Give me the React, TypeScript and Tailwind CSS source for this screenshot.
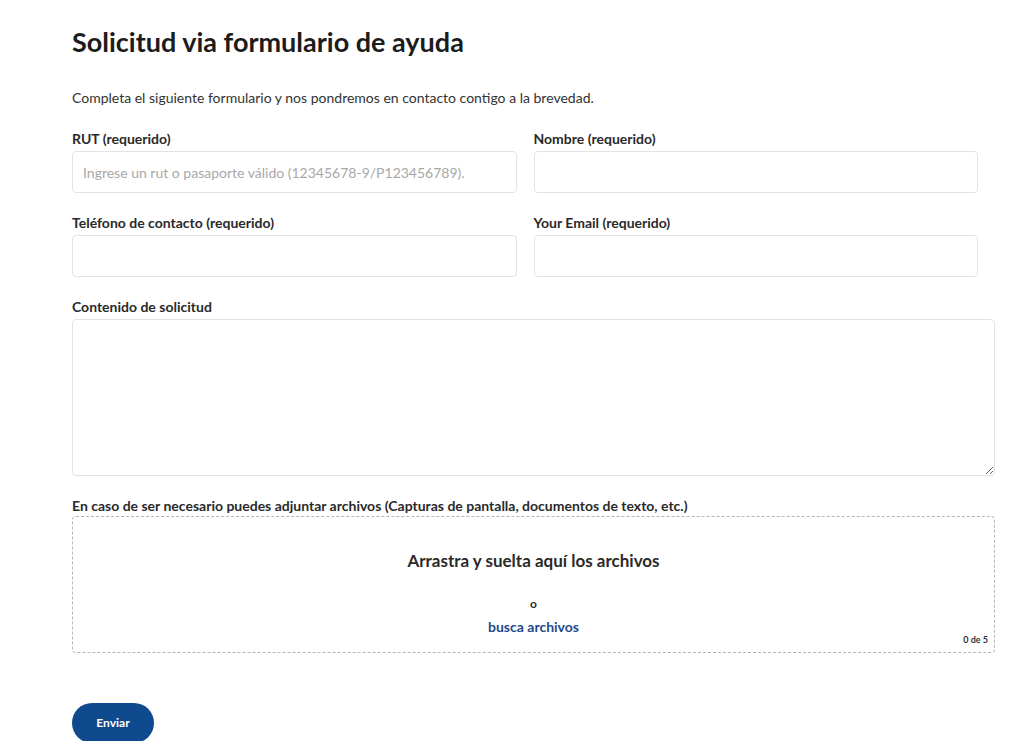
import React from "react";

export default function App() {
  const font = { fontFamily: "Lato, 'Noto Sans', sans-serif" };
  return (
    <div className="min-h-[741px] w-[1024px] bg-white text-[#222]" style={font}>
      <div className="pl-[72px] pr-[29px] pt-[26px]">
        <h1 className="text-[27px] font-bold leading-[32px] text-[#1c1c1c]">Solicitud via formulario de ayuda</h1>
        <p className="mt-[31px] text-[14px] leading-[18px] text-[#333]">
          Completa el siguiente formulario y nos pondremos en contacto contigo a la brevedad.
        </p>
        <div className="mt-[23px] grid w-[906px] grid-cols-2 gap-x-[17px] gap-y-[21px]">
          <Field label="RUT (requerido)" placeholder="Ingrese un rut o pasaporte válido (12345678-9/P123456789)." />
          <Field label="Nombre (requerido)" />
          <Field label="Teléfono de contacto (requerido)" />
          <Field label="Your Email (requerido)" />
        </div>
        <div className="mt-[21px]">
          <label className="block text-[14px] font-bold leading-[18px] text-[#2a2a2a]">Contenido de solicitud</label>
          <textarea className="mt-[3px] block h-[157px] w-full resize-y rounded-[4px] border border-[#e3e3e3] bg-white outline-none" />
        </div>
        <div className="mt-[21px]">
          <label className="block text-[14px] font-bold leading-[18px] text-[#2a2a2a]">
            En caso de ser necesario puedes adjuntar archivos (Capturas de pantalla, documentos de texto, etc.)
          </label>
          <div className="relative mt-[1px] flex h-[137px] w-full flex-col items-center rounded-[4px] border border-dashed border-[#b5b5b5]">
            <div className="mt-[34px] text-[17px] font-bold leading-[20px] text-[#2a2a2a]">Arrastra y suelta aquí los archivos</div>
            <div className="mt-[25px] text-[12px] font-bold leading-[16px] text-[#2a2a2a]">o</div>
            <div className="mt-[6px] text-[14px] font-bold leading-[18px] text-[#1f4b8c]">busca archivos</div>
            <div className="absolute bottom-[6px] right-[6px] text-[9px] font-bold leading-[12px] text-[#333]">0 de 5</div>
          </div>
        </div>
        <button className="mt-[50px] h-[40px] w-[82px] rounded-full bg-[#104a8e] text-[12px] font-bold text-white">
          Enviar
        </button>
      </div>
    </div>
  );
}

function Field({ label, placeholder }: { label: string; placeholder?: string }) {
  return (
    <div>
      <label className="block text-[14px] font-bold leading-[18px] text-[#2a2a2a]">{label}</label>
      <input
        placeholder={placeholder}
        className="mt-[3px] block h-[42px] w-full rounded-[4px] border border-[#e3e3e3] bg-white px-[10px] text-[14px] text-[#333] outline-none placeholder:text-[#a8a8a8]"
      />
    </div>
  );
}
